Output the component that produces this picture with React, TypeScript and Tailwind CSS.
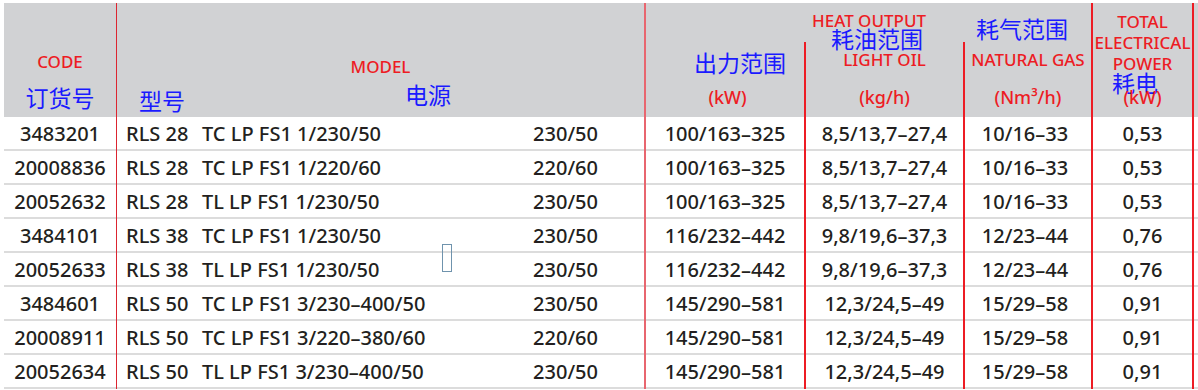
import React from 'react';

// Burner price list table: RLS series
const rows = [
  ['3483201', 'RLS 28', 'TC LP FS1 1/230/50', '230/50', '100/163–325', '8,5/13,7–27,4', '10/16–33', '0,53'],
  ['20008836', 'RLS 28', 'TC LP FS1 1/220/60', '220/60', '100/163–325', '8,5/13,7–27,4', '10/16–33', '0,53'],
  ['20052632', 'RLS 28', 'TL LP FS1 1/230/50', '230/50', '100/163–325', '8,5/13,7–27,4', '10/16–33', '0,53'],
  ['3484101', 'RLS 38', 'TC LP FS1 1/230/50', '230/50', '116/232–442', '9,8/19,6–37,3', '12/23–44', '0,76'],
  ['20052633', 'RLS 38', 'TL LP FS1 1/230/50', '230/50', '116/232–442', '9,8/19,6–37,3', '12/23–44', '0,76'],
  ['3484601', 'RLS 50', 'TC LP FS1 3/230–400/50', '230/50', '145/290–581', '12,3/24,5–49', '15/29–58', '0,91'],
  ['20008911', 'RLS 50', 'TC LP FS1 3/220–380/60', '220/60', '145/290–581', '12,3/24,5–49', '15/29–58', '0,91'],
  ['20052634', 'RLS 50', 'TL LP FS1 3/230–400/50', '230/50', '145/290–581', '12,3/24,5–49', '15/29–58', '0,91'],
];

const red = "text-[#ed1c24] font-['Noto_Sans',sans-serif] font-medium text-[17px] leading-[16px] whitespace-nowrap";
const blue = "text-[#1a1aff] font-['Noto_Sans_CJK_SC',sans-serif] font-normal text-[23px] leading-[24px] whitespace-nowrap";
const cell = 'h-[34px] border-b-2 border-[#dcdcdc] pt-[1px] leading-[31px] whitespace-nowrap';

function Cells({ col, className = '' }: { col: number; className?: string }) {
  return (
    <>
      {rows.map((r, i) => (
        <div key={i} className={`${cell} ${className}`}>
          {r[col]}
        </div>
      ))}
    </>
  );
}

export default function App() {
  return (
    <div className="bg-white w-[1198px] h-[390px] overflow-hidden pt-[3px] pl-[4px] text-[#231f20] font-['Noto_Sans',sans-serif] font-medium text-[20px]">
      <div className="flex">
        {/* CODE */}
        <div className="w-[113px] border-r border-[#dc2530] flex flex-col">
          <div className="h-[114px] bg-[#d1d2d4] flex flex-col items-center">
            <div className={`${red} mt-[51px]`}>CODE</div>
            <div className={`${blue} mt-[15px]`}>订货号</div>
          </div>
          <Cells col={0} className="text-center" />
        </div>

        {/* MODEL + power supply */}
        <div className="relative w-[529px] border-r-2 border-[#e8666f] flex flex-col">
          <div className="h-[114px] bg-[#d1d2d4] flex flex-col">
            <div className={`${red} mt-[56px] text-center`}>MODEL</div>
            <div className="flex items-start mt-[7px]">
              <span className={`${blue} w-[288px] pl-[22px] mt-[6px]`}>型号</span>
              <span className={blue}>电源</span>
            </div>
          </div>
          {rows.map((r, i) => (
            <div key={i} className={`${cell} flex pl-[9px] pr-[46px]`}>
              <span className="w-[76px]">{r[1]}</span>
              <span className="flex-1">{r[2]}</span>
              <span>{r[3]}</span>
            </div>
          ))}
          <span className="absolute left-[325px] top-[241px] w-[10px] h-[28px] border border-[#6f93ad]" />
        </div>

        {/* HEAT OUTPUT kW */}
        <div className="w-[158px] flex flex-col">
          <div className="h-[114px] bg-[#d1d2d4] flex flex-col">
            <div className={`${blue} mt-[47px] pl-[48px]`}>出力范围</div>
            <div className={`${red} text-[18px] leading-[18px] mt-[14px] text-center pl-[5px]`}>(kW)</div>
          </div>
          <Cells col={4} className="text-center" />
        </div>

        {/* LIGHT OIL */}
        <div className="w-[159px] flex flex-col">
          <div className="h-[39px] bg-[#d1d2d4] pt-[10px] pl-[8px]">
            <div className={red}>HEAT OUTPUT</div>
          </div>
          <div className="border-l-2 border-[#ed1c24] flex flex-col">
            <div className="h-[75px] bg-[#d1d2d4] flex flex-col">
              <div className={`${blue} -mt-[16px] pl-[25px]`}>耗油范围</div>
              <div className={`${red} mt-[2px] text-center`}>LIGHT OIL</div>
              <div className={`${red} text-[18px] leading-[18px] mt-[20px] text-center`}>(kg/h)</div>
            </div>
            <Cells col={5} className="text-center" />
          </div>
        </div>

        {/* NATURAL GAS */}
        <div className="w-[128px] flex flex-col">
          <div className="h-[39px] bg-[#d1d2d4] pt-[13px] pl-[13px]">
            <div className={blue}>耗气范围</div>
          </div>
          <div className="border-l-2 border-[#ed1c24] flex flex-col">
            <div className="h-[75px] bg-[#d1d2d4] flex flex-col">
              <div className={`${red} mt-[10px] text-center`}>NATURAL GAS</div>
              <div className={`${red} text-[18px] leading-[18px] mt-[20px] text-center`}>(Nm³/h)</div>
            </div>
            <Cells col={6} className="text-center pr-[6px]" />
          </div>
        </div>

        {/* TOTAL ELECTRICAL POWER */}
        <div className="w-[103px] border-x-2 border-[#ed1c24] flex flex-col">
          <div className="h-[114px] bg-[#d1d2d4] flex flex-col pt-[8px]">
            <div className={`${red} leading-[21px] text-center`}>TOTAL</div>
            <div className={`${red} leading-[21px] text-center`}>ELECTRICAL</div>
            <div className={`${red} leading-[21px] text-center`}>POWER</div>
            <div className={`${blue} -mt-[4px] pl-[19px]`}>耗电</div>
            <div className={`${red} text-[18px] leading-[18px] -mt-[6px] text-center`}>(kW)</div>
          </div>
          <Cells col={7} className="text-center" />
        </div>

        {/* trailing edge */}
        <div className="flex-1 flex flex-col">
          <div className="h-[114px] bg-[#d1d2d4]" />
          {rows.map((_, i) => (
            <div key={i} className={cell} />
          ))}
        </div>
      </div>
    </div>
  );
}
